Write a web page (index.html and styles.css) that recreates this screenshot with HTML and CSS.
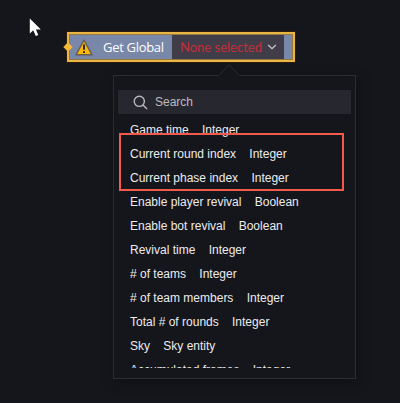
FILE: index.html
```html
<!DOCTYPE html>
<html lang="en">
<head>
<meta charset="utf-8">
<title>Get Global</title>
<link rel="stylesheet" href="styles.css">
</head>
<body>
<main class="canvas">
  <svg class="cursor" width="14" height="20" viewBox="0 0 14 20"><path d="M.8.5V15.5L4.2 12.3 6.8 18 9.3 17 6.9 11.5H11.8Z" fill="#fff"/></svg>
  <section class="node">
    <svg class="port" width="10" height="10" viewBox="0 0 10 10"><path d="M5 .3 9.7 5 5 9.7.3 5Z" fill="#f5b738"/></svg>
    <svg class="warning" width="18" height="17" viewBox="0 0 18 17"><path d="M9 1.2 17 15.8H1Z" fill="#ffb60a" stroke="#665e50" stroke-width="1.4" stroke-linejoin="round"/><path d="M9 5.5V10.8M9 12.2V14" stroke="#332b1c" stroke-width="2"/></svg>
    <span class="title">Get Global</span>
    <div class="select"><span class="value">None selected</span><svg width="10" height="8" viewBox="0 0 10 8"><path d="M1.2 2 5 5.6 8.8 2" fill="none" stroke="#c8c8cc" stroke-width="1.3"/></svg></div>
  </section>
  <section class="popup">
    <svg class="arrow" width="24" height="12" viewBox="0 0 24 12"><path d="M1 11.5 12 .7 23 11.5V12H1Z" fill="#15161b"/><path d="M.5 11.5H1.5L12 .7 22.5 11.5H23.5" fill="none" stroke="#2c2d32"/></svg>
    <div class="search"><svg width="15" height="15" viewBox="0 0 15 15"><circle cx="6.3" cy="6.3" r="5.1" fill="none" stroke="#b9b9be" stroke-width="1.4"/><path d="M10 10 14 14" stroke="#b9b9be" stroke-width="1.4"/></svg><span>Search</span></div>
    <ul class="list">
      <li><span>Game time</span><span>Integer</span></li>
      <li><span>Current round index</span><span>Integer</span></li>
      <li><span>Current phase index</span><span>Integer</span></li>
      <li><span>Enable player revival</span><span>Boolean</span></li>
      <li><span>Enable bot revival</span><span>Boolean</span></li>
      <li><span>Revival time</span><span>Integer</span></li>
      <li><span># of teams</span><span>Integer</span></li>
      <li><span># of team members</span><span>Integer</span></li>
      <li><span>Total # of rounds</span><span>Integer</span></li>
      <li><span>Sky</span><span>Sky entity</span></li>
      <li><span>Accumulated frames</span><span>Integer</span></li>
    </ul>
    <div class="highlight"></div>
  </section>
</main>
</body>
</html>
```
FILE: styles.css
```css
* { box-sizing: border-box; }
body { margin: 0; background: #15161b; }
svg { display: block; flex: none; }
.canvas {
  position: relative;
  width: 400px;
  height: 403px;
  overflow: hidden;
  padding-top: 32px;
  font: 12px "Liberation Sans", sans-serif;
  color: #ececee;
}
.cursor { position: absolute; left: 29px; top: 18px; }
.node {
  position: relative;
  display: flex;
  align-items: center;
  width: 228px;
  height: 30px;
  margin-left: 67px;
  padding-left: 6px;
  border: 2px solid #eab543;
  background: #7987a9;
  box-shadow: inset 0 0 0 1px #927b43, 0 0 0 1px #2a1d10;
}
.port { position: absolute; left: -6px; top: 8px; }
.title {
  width: 69px;
  margin-left: 10px;
  font: 13px/24px "Open Sans", sans-serif;
  letter-spacing: -.3px;
  color: #fff;
  white-space: nowrap;
}
.select {
  display: flex;
  align-items: center;
  width: 112px;
  height: 24px;
  padding-left: 8px;
  background: #403d49;
}
.value {
  width: 87px;
  font: 13px/24px Lato, sans-serif;
  color: #c32f38;
  white-space: nowrap;
}
.popup {
  position: relative;
  width: 243px;
  height: 304px;
  margin: 13px 0 0 113px;
  padding: 14px 4px 0;
  border: 1px solid #2c2d32;
  box-shadow: 2px 3px 12px rgba(0, 0, 0, .35);
}
.arrow { position: absolute; left: 103px; top: -12px; }
.search {
  display: flex;
  align-items: center;
  gap: 7px;
  height: 24px;
  padding-left: 15px;
  background: #27272f;
  color: #bdbdc2;
}
.list {
  height: 244px;
  margin: 10px 0 0;
  padding: 0 0 0 12px;
  overflow: hidden;
  list-style: none;
}
.list li { display: flex; gap: 13.3px; height: 24px; line-height: 24px; }
.list li:first-child { margin-top: -6px; }
.highlight {
  position: absolute;
  left: 5px;
  top: 57px;
  width: 225px;
  height: 58px;
  border: 2px solid #f25a4d;
}
```
